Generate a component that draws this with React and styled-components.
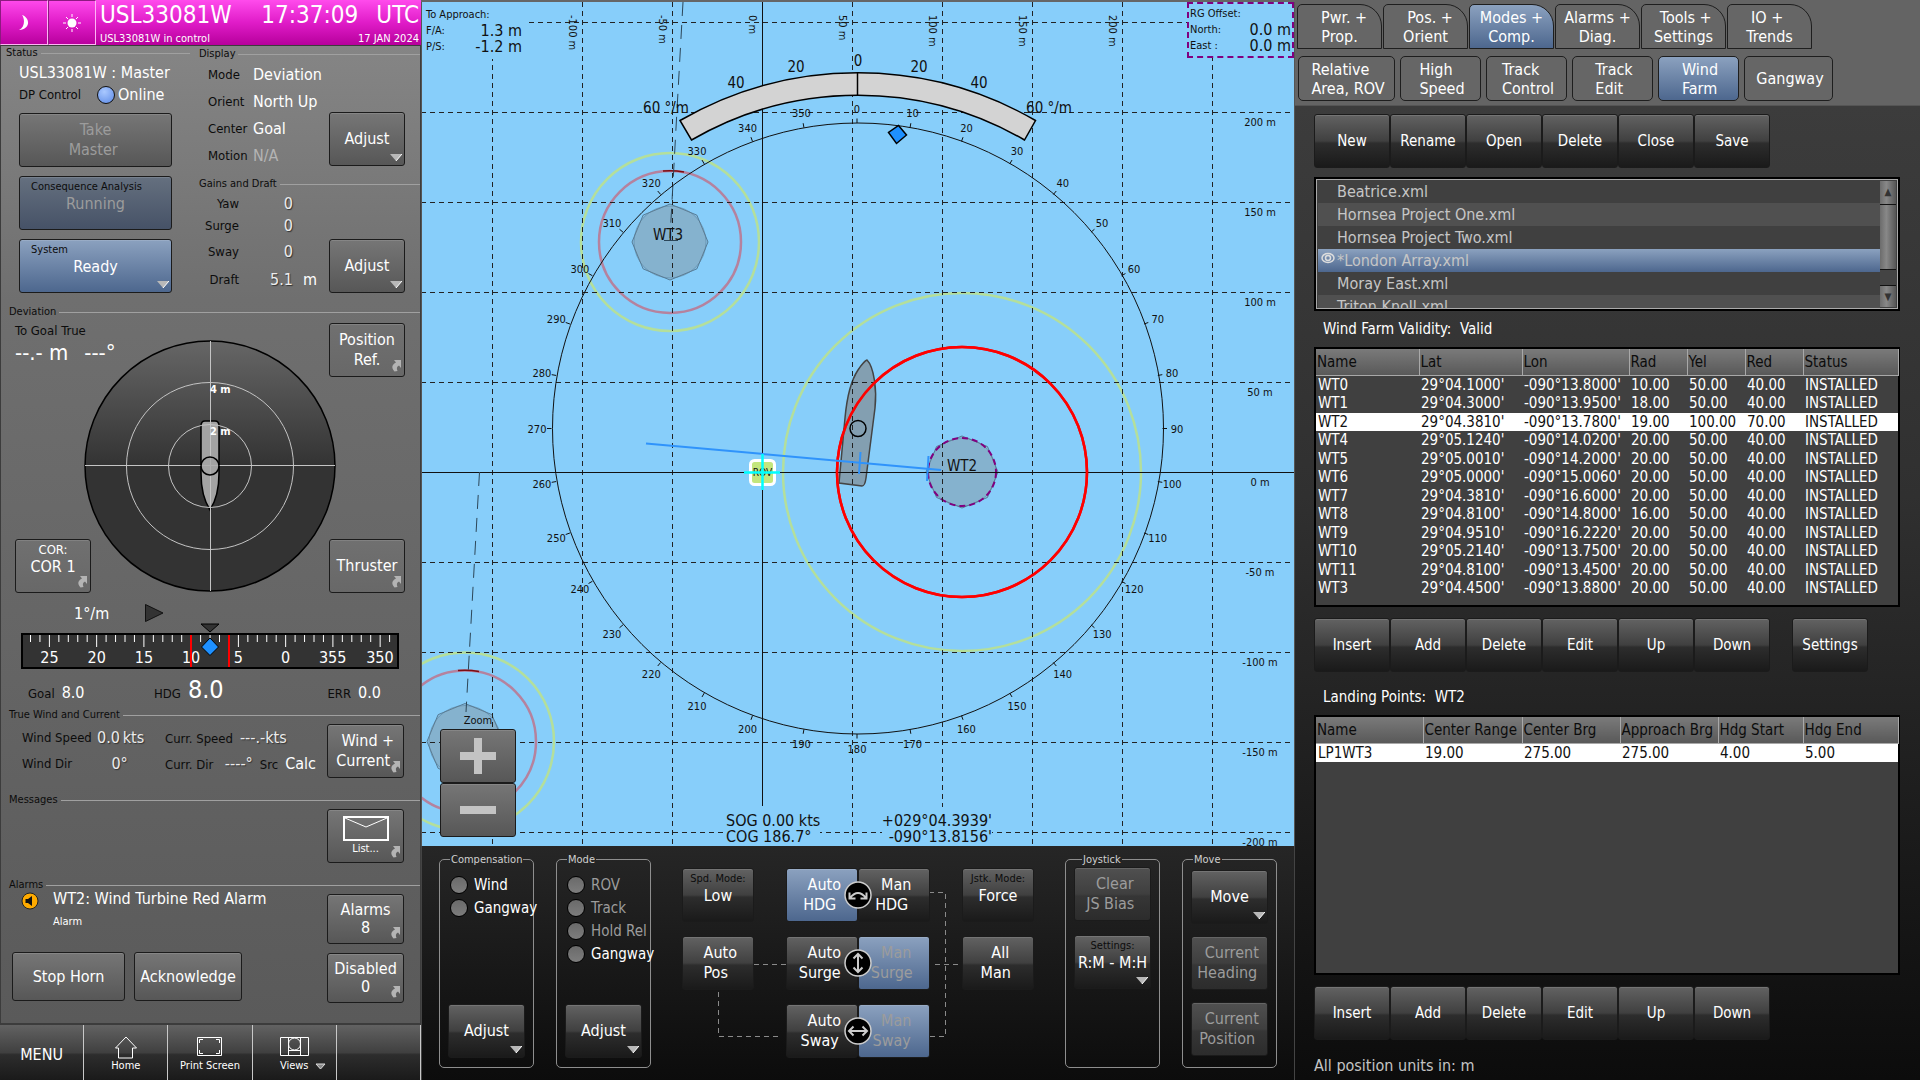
import React from 'react';
import styled, { createGlobalStyle, css } from 'styled-components';

const WATER = '#87cefa';

const turbines = [
  ['WT0', "29°04.1000'", "-090°13.8000'", '10.00', '50.00', '40.00', 'INSTALLED'],
  ['WT1', "29°04.3000'", "-090°13.9500'", '18.00', '50.00', '40.00', 'INSTALLED'],
  ['WT2', "29°04.3810'", "-090°13.7800'", '19.00', '100.00', '70.00', 'INSTALLED'],
  ['WT4', "29°05.1240'", "-090°14.0200'", '20.00', '50.00', '40.00', 'INSTALLED'],
  ['WT5', "29°05.0010'", "-090°14.2000'", '20.00', '50.00', '40.00', 'INSTALLED'],
  ['WT6', "29°05.0000'", "-090°15.0060'", '20.00', '50.00', '40.00', 'INSTALLED'],
  ['WT7', "29°04.3810'", "-090°16.6000'", '20.00', '50.00', '40.00', 'INSTALLED'],
  ['WT8', "29°04.8100'", "-090°14.8000'", '16.00', '50.00', '40.00', 'INSTALLED'],
  ['WT9', "29°04.9510'", "-090°16.2220'", '20.00', '50.00', '40.00', 'INSTALLED'],
  ['WT10', "29°05.2140'", "-090°13.7500'", '20.00', '50.00', '40.00', 'INSTALLED'],
  ['WT11', "29°04.8100'", "-090°13.4500'", '20.00', '50.00', '40.00', 'INSTALLED'],
  ['WT3', "29°04.4500'", "-090°13.8800'", '20.00', '50.00', '40.00', 'INSTALLED'],
];

const landingPoints = [['LP1WT3', '19.00', '275.00', '275.00', '4.00', '5.00']];

const files = [
  'Beatrice.xml',
  'Hornsea Project One.xml',
  'Hornsea Project Two.xml',
  '*London Array.xml',
  'Moray East.xml',
  'Triton Knoll.xml',
];

const mainTabs = [
  ['\u00a0\u00a0Pwr. +', 'Prop.'],
  ['\u00a0\u00a0Pos. +', 'Orient'],
  ['Modes +', 'Comp.'],
  ['Alarms +', 'Diag.'],
  ['\u00a0Tools +', 'Settings'],
  ['IO +\u00a0', 'Trends'],
];

const subTabs = [
  { lines: ['Relative', 'Area, ROV'], width: 97 },
  { lines: ['High', 'Speed'], width: 81 },
  { lines: ['Track', 'Control'], width: 81 },
  { lines: ['Track', 'Edit'], width: 81 },
  { lines: ['Wind', 'Farm'], width: 81, active: true },
  { lines: ['Gangway'], width: 89 },
];

const ShortcutMark = () => (
  <Mark viewBox="0 0 11 13" width="11" height="13">
    <path d="M3 1H10V9L8 6.5C5.5 7.5 5.5 9.5 6.5 12L3.5 12.5C0 8.5 1 5.5 5 3.5Z" fill="#b4b4b4" />
  </Mark>
);

const MenuMark = () => (
  <Mark viewBox="0 0 12 7" width="12" height="7">
    <path d="M0 0H12L6 7Z" fill="#b8b8b8" />
    <path d="M12 0L6 7" stroke="#fff" fill="none" />
  </Mark>
);

const Act = ({ lines, caption, mark, ...rest }) => (
  <Button type="button" {...rest}>
    {caption && <Caption>{caption}</Caption>}
    {lines.map((line) => <span key={line}>{line}</span>)}
    {mark === 'menu' && <MenuMark />}
    {mark === 'link' && <ShortcutMark />}
  </Button>
);

const DeviationDial = () => (
  <Dial viewBox="83 340 254 254">
    <defs>
      <linearGradient id="dialFill" x1="0" y1="0" x2="0" y2="1">
        <stop offset="0" stopColor="#666" />
        <stop offset="0.5" stopColor="#333" />
        <stop offset="1" stopColor="#333" />
      </linearGradient>
    </defs>
    <circle cx="210" cy="467" r="125" fill="url(#dialFill)" stroke="#000" strokeWidth="1.5" />
    <path d="M201 427Q201 422 205 422H215Q219 422 219 427V474Q219 497 210 511Q201 497 201 474Z" fill="#a3a3a3" stroke="#000" strokeWidth="1.5" />
    <g fill="none" stroke="#c4c4c4">
      <path d="M210.5 342V592M85 466.5H335" />
      <circle cx="210" cy="467" r="83.5" />
      <circle cx="210" cy="467" r="41.5" />
    </g>
    <circle cx="210" cy="467" r="9" fill="#a3a3a3" fillOpacity="0.6" stroke="#000" strokeWidth="1.5" />
    <g fill="#fff" fontSize="11" fontWeight="bold">
      <text x="210" y="394">4 m</text>
      <text x="210" y="436">2 m</text>
    </g>
  </Dial>
);

const tapeTicks = Array.from({ length: 39 }, (_, i) => i);
const tapeLabels = ['25', '20', '15', '10', '5', '0', '355', '350'];

const HeadingTape = () => (
  <Tape viewBox="20 622 380 49">
    <rect x="22" y="634" width="376" height="34" fill="#333" stroke="#000" strokeWidth="2" />
    <g stroke="#fff">
      {tapeTicks.map((i) => (
        <path key={i} d={`M${30.5 + i * 9.45} 635V${(i - 2) % 5 === 0 ? 647 : 642}`} />
      ))}
    </g>
    <g fill="#fff" fontSize="16" textAnchor="middle">
      {tapeLabels.map((label, i) => <text key={label} x={49.5 + i * 47.2} y="663">{label}</text>)}
    </g>
    <path d="M191 635V667M229 635V667" stroke="#f00" strokeWidth="2" />
    <path d="M201 624H219L210 632Z" fill="#333" stroke="#000" />
    <path d="M210 638L218.5 647L210 655.5L201.5 647Z" fill="#1e90ff" stroke="#000" />
  </Tape>
);

const compassMarks = Array.from({ length: 36 }, (_, i) => i * 10);

const polar = (deg, r, cx = 857, cy = 428.5) => {
  const a = (deg * Math.PI) / 180;
  return [cx + r * Math.sin(a), cy - r * Math.cos(a)];
};

const octagon = (cx, cy, r) =>
  Array.from({ length: 8 }, (_, i) => polar(i * 45, r, cx, cy).join(',')).join(' ');

const Turbine = ({ cx, cy, size = 38, yellow, red, alarm, dashed }) => (
  <g fill="none">
    <circle cx={cx} cy={cy} r={yellow} stroke="#b4df9b" strokeWidth="2.5" />
    <circle cx={cx} cy={cy} r={red} stroke={alarm ? '#f00' : '#b5829e'} strokeWidth="2.5" />
    {!alarm && <path d={`M${cx - 7} ${cy - red}Q${cx + 3} ${cy - red - 1} ${cx + 14} ${cy - red + 1}`} stroke="#7c0c12" strokeWidth="1.5" />}
    <polygon points={octagon(cx, cy, size)} fill="#828282" fillOpacity="0.2" stroke="#567b95" />
    <circle cx={cx} cy={cy} r={size - 2} fill="#828282" fillOpacity="0.2" stroke="#567b95" strokeOpacity="0.5" />
    {dashed && <circle cx={cx} cy={cy} r={size - 2} stroke="#800080" strokeWidth="2" strokeDasharray="6 4" />}
  </g>
);

const gridX = [492.5, 582.5, 672.5, 852.5, 942.5, 1032.5, 1122.5, 1212.5];
const gridY = [22.5, 112.5, 202.5, 292.5, 382.5, 562.5, 652.5, 742.5, 832.5];

const Chart = () => (
  <ChartSvg viewBox="421 2 874 844">
    <rect x="421" y="2" width="874" height="844" fill={WATER} />
    <Turbine cx={670} cy={242} yellow={89} red={71} />
    <Turbine cx={465} cy={741.5} yellow={89} red={71} />
    <Turbine cx={962} cy={472} size={36} yellow={179} red={125} alarm dashed />
    <path d="M867 360C874 367 877 390 875 408L866 478Q865 486 862 486L839 483L845 418Q848 385 858 370Q864 361 867 360Z" fill="#808080" fillOpacity="0.6" stroke="#444" strokeWidth="1.5" />
    <g stroke="#222" strokeDasharray="5 4">
      {gridX.map((x) => <path key={x} d={`M${x} 2V845`} />)}
      {gridY.map((y) => <path key={y} d={`M421 ${y}H1290`} />)}
    </g>
    <g stroke="#111">
      <path d="M421 472.5H1294M762.5 2V806" />
      <path d="M683 2L676 128L670 238M479.5 472L466 712" stroke="#2c4658" strokeDasharray="14 9" fill="none" />
      <path d="M664 240.5H678" stroke="#2c4658" />
    </g>
    <circle cx="962" cy="472" r="125" fill="none" stroke="#f00" strokeWidth="2.5" />
    <circle cx="858" cy="428.5" r="305.5" fill="none" stroke="#111" />
    <g stroke="#111">
      {compassMarks.map((deg) => {
        const [x1, y1] = polar(deg, 305.5);
        const [x2, y2] = polar(deg, 310);
        return <path key={deg} d={`M${x1} ${y1}L${x2} ${y2}`} />;
      })}
    </g>
    <g fontSize="11" textAnchor="middle">
      {compassMarks.map((deg) => {
        const [x, y] = polar(deg, 320);
        return <text key={deg} x={x} y={y + 4}>{deg}</text>;
      })}
    </g>
    <path d="M680 120.5A355 355 0 0 1 1035.5 120.5L1024.5 140A332 332 0 0 0 691.5 140Z" fill="#d3d3d3" stroke="#000" strokeWidth="1.5" />
    <path d="M857.5 73V96" stroke="#000" strokeWidth="1.5" />
    <g fontSize="15" textAnchor="middle">
      <text x="858" y="66">0</text>
      <text x="796" y="72">20</text>
      <text x="919" y="72">20</text>
      <text x="736" y="88">40</text>
      <text x="979" y="88">40</text>
      <text x="666" y="113">60 °/m</text>
      <text x="1049" y="113">60 °/m</text>
      <text x="668" y="240">WT3</text>
      <text x="962" y="471">WT2</text>
    </g>
    <path d="M898.5 125.5L906.5 135L896.5 143.5L888.5 132.5Z" fill="#1e90ff" stroke="#000" strokeWidth="1.5" />
    <circle cx="858" cy="428.5" r="8" fill="none" stroke="#000" strokeWidth="1.5" />
    <path d="M646 443.5L941 470M860.5 452L859 474M928.5 456L927 481" stroke="#2f93fb" strokeWidth="2" />
    <rect x="750.5" y="460.5" width="24" height="24" rx="4" fill="#c3e67d" stroke="#fff" strokeWidth="3" />
    <text x="762.5" y="476" fontSize="10" textAnchor="middle">ROV</text>
    <path d="M744 472.5H780M762.5 454V490" stroke="#0ff" strokeWidth="2.5" />
    <g fontSize="11">
      {[[-100, 569], [-50, 659], [0, 749], [50, 839], [100, 929], [150, 1019], [200, 1109]].map(([v, x]) => (
        <text key={v} transform={`translate(${x} 15) rotate(90)`}>{v} m</text>
      ))}
    </g>
    <g fontSize="11" textAnchor="middle">
      {[200, 150, 100, 50, 0, -50, -100, -150, -200].map((v, i) => (
        <text key={v} x="1260" y={126 + i * 90}>{v} m</text>
      ))}
    </g>
  </ChartSvg>
);

const arrows = {
  turn: 'M6 17Q14 7 22 17M5.5 11.5V17.5H11.5M22.5 11.5V17.5H16.5',
  vertical: 'M14 5V23M9.5 9.5L14 5L18.5 9.5M9.5 18.5L14 23L18.5 18.5',
  horizontal: 'M5 14H23M9.5 9.5L5 14L9.5 18.5M18.5 9.5L23 14L18.5 18.5',
};

const AxisPair = ({ axis, icon, autoOn }) => (
  <Pair>
    <Act lines={['\u00a0Auto', `${axis}\u00a0`]} tone={autoOn ? 'blue' : 'dark'} />
    <Act lines={['\u00a0Man', `${axis}\u00a0`]} tone={autoOn ? 'dark' : 'blue'} dim={!autoOn} />
    <AxisIcon viewBox="0 0 28 28">
      <circle cx="14" cy="14" r="13" fill="#000" stroke="#ccc" strokeWidth="1.5" />
      <path d={arrows[icon]} fill="none" stroke="#ccc" strokeWidth="2" />
    </AxisIcon>
  </Pair>
);

const LeftPanel = () => (
  <Side>
    <TopBar>
      <ThemeButton type="button" aria-label="Night">
        <svg width="12" height="16" viewBox="0 0 12 16"><path d="M4 0C13 3 12 15 1 15C7 12 7 4 4 0Z" fill="#fff" /></svg>
      </ThemeButton>
      <ThemeButton type="button" aria-label="Day">
        <svg width="18" height="18" viewBox="0 0 18 18">
          <circle cx="9" cy="9" r="4.5" fill="#fff" />
          <path d="M9 0V3M9 15V18M0 9H3M15 9H18M3 3L5 5M13 13L15 15M15 3L13 5M5 13L3 15" stroke="#fff" />
        </svg>
      </ThemeButton>
      <TopText>
        <TopLine big><span>USL33081W</span><TopClock><span>17:37:09</span><span>UTC</span></TopClock></TopLine>
        <TopLine><span>USL33081W in control</span><span>17 JAN 2024</span></TopLine>
      </TopText>
    </TopBar>
    <SideBody>
      <StatusGrid>
        <StatusCol>
          <Title end={9}>Status</Title>
          <Value>USL33081W : Master</Value>
          <Online><Label>DP Control</Label><Led /><Value>Online</Value></Online>
          <Act lines={['Take', 'Master\u00a0']} tone="metal" dim tall disabled />
          <Act caption="Consequence Analysis" lines={['Running']} tone="slate" dim tall disabled />
          <Act caption="System" lines={['Ready']} tone="blue" mark="menu" tall />
        </StatusCol>
        <DisplayCol>
          <Title>Display</Title>
          <WithButton>
            <DisplayList>
              <Label as="dt">Mode</Label><Value as="dd">Deviation</Value>
              <Label as="dt">Orient</Label><Value as="dd">North Up</Value>
              <Label as="dt">Center</Label><Value as="dd">Goal</Value>
              <Label as="dt">Motion</Label><Value as="dd" dim>N/A</Value>
            </DisplayList>
            <ButtonSlot drop={3}><Act lines={['Adjust']} tone="metal" mark="menu" /></ButtonSlot>
          </WithButton>
          <GainTitle>Gains and Draft</GainTitle>
          <WithButton>
            <GainList>
              <Label as="dt">Yaw</Label><Value as="dd" raised>0</Value><span />
              <Label as="dt">Surge</Label><Value as="dd" raised>0</Value><span />
              <Label as="dt">Sway</Label><Value as="dd" raised>0</Value><span />
              <Label as="dt">Draft</Label><Value as="dd" raised>5.1</Value><Value>m</Value>
            </GainList>
            <ButtonSlot drop={0}><Act lines={['Adjust']} tone="metal" mark="menu" /></ButtonSlot>
          </WithButton>
        </DisplayCol>
      </StatusGrid>
      <Title inset={8} top={12}>Deviation</Title>
      <DeviationGrid>
        <DeviationDial />
        <Goal><Label>To Goal True</Label><Reading><span>--.- m</span><span>---°</span></Reading></Goal>
        <Corner place="top-right"><Act lines={['Position', 'Ref.']} tone="flat" mark="link" /></Corner>
        <Corner place="bottom-left"><Act lines={['COR 1']} tone="flat" caption="COR:" light mark="link" /></Corner>
        <Corner place="bottom-right"><Act lines={['Thruster']} tone="flat" mark="link" /></Corner>
      </DeviationGrid>
      <RateRow>
        <Value>1°/m</Value>
        <svg width="19" height="18" viewBox="0 0 19 18"><path d="M0.5 0.5L18 9L0.5 17.5Z" fill="#333" stroke="#111" /></svg>
      </RateRow>
      <HeadingTape />
      <HeadingRow>
        <Figure><Label>Goal</Label><Value>8.0</Value></Figure>
        <Figure><Label>HDG</Label><Value big>8.0</Value></Figure>
        <Figure><Label>ERR</Label><Value>0.0</Value></Figure>
      </HeadingRow>
      <Title inset={8} top={4}>True Wind and Current</Title>
      <WindBlock>
        <WindGrid>
          <Label>Wind Speed</Label><Value raised>0.0&#8201;kts</Value>
          <Figure><Label>Curr. Speed</Label><Value raised>---.-kts</Value></Figure>
          <Label>Wind Dir</Label><Value raised>&emsp;0°</Value>
          <Figure><Label>Curr. Dir</Label><Value raised>&nbsp;----°</Value><Label>Src</Label><Value>Calc</Value></Figure>
        </WindGrid>
        <Act lines={['\u00a0Wind +', 'Current\u00a0']} tone="metal" mark="link" />
      </WindBlock>
      <Title inset={8} top={15}>Messages</Title>
      <MessageBlock>
        <Button type="button" tone="metal">
          <svg width="46" height="26" viewBox="0 0 46 26"><path d="M1 1H45V24H1Z" fill="none" stroke="#fff" strokeWidth="2" /><path d="M2 2L23 11L44 2" fill="none" stroke="#fff" /></svg>
          <Tiny>List...</Tiny>
          <ShortcutMark />
        </Button>
      </MessageBlock>
      <Title inset={8} top={15}>Alarms</Title>
      <AlarmBlock>
        <AlarmLeft>
          <AlarmLine>
            <svg width="18" height="18" viewBox="0 0 18 18">
              <circle cx="9" cy="9" r="8" fill="#ffab00" stroke="#222" />
              <path d="M4.5 7H7L11 4V14L7 11H4.5Z" fill="#111" />
            </svg>
            <AlarmText><Value>WT2: Wind Turbine Red Alarm</Value><Tiny>Alarm</Tiny></AlarmText>
          </AlarmLine>
          <AlarmActions>
            <Act lines={['Stop Horn']} tone="metal" />
            <Act lines={['Acknowledge']} tone="metal" />
          </AlarmActions>
        </AlarmLeft>
        <AlarmRight>
          <Act lines={['Alarms', '8']} tone="metal" mark="link" tight />
          <Act lines={['Disabled', '0']} tone="metal" mark="link" tight />
        </AlarmRight>
      </AlarmBlock>
    </SideBody>
    <Footer>
      <FootButton type="button">MENU</FootButton>
      <FootButton type="button">
        <svg width="24" height="23" viewBox="0 0 24 23"><path d="M12 1L22.5 12H18.5V22H4.5V12H1.5Z" fill="none" stroke="#fff" /></svg>
        <Tiny>Home</Tiny>
      </FootButton>
      <FootButton type="button">
        <svg width="25" height="23" viewBox="0 0 25 23"><path d="M0.5 1.5H24.5V19.5H0.5Z" fill="none" stroke="#fff" /><path d="M2.5 7V3.5H6M19 3.5H22.5V7M22.5 14V17.5H19M6 17.5H2.5V14" fill="none" stroke="#fff" /></svg>
        <Tiny>Print Screen</Tiny>
      </FootButton>
      <FootButton type="button">
        <svg width="29" height="23" viewBox="0 0 29 23"><path d="M0.5 1.5H28.5V19.5H0.5ZM8.5 1.5V19.5M20.5 1.5V19.5M8.5 14.5H20.5" fill="none" stroke="#fff" /><circle cx="14.5" cy="8" r="6" fill="none" stroke="#fff" /></svg>
        <Tiny>Views</Tiny>
        <FootMark viewBox="0 0 12 7"><path d="M1 1H10L5.5 6Z" fill="#888" stroke="#ddd" /></FootMark>
      </FootButton>
      <FootButton type="button" aria-label="Empty slot" />
    </Footer>
  </Side>
);

const CenterPanel = () => (
  <Center>
    <MapArea>
      <Chart />
      <Approach>
        <small>To Approach:</small><span />
        <small>F/A:</small><span>1.3 m</span>
        <small>P/S:</small><span>-1.2 m</span>
      </Approach>
      <Offset>
        <small>RG Offset:</small><span />
        <small>North:</small><span>0.0 m</span>
        <small>East :</small><span>0.0 m</span>
      </Offset>
      <Speed><span>SOG 0.00 kts</span><span>COG 186.7°</span></Speed>
      <Position><span>+029°04.3939'</span><span>-090°13.8156'</span></Position>
      <Zoom>
        <span>Zoom</span>
        <Button type="button" tone="metal" aria-label="Zoom in"><svg width="36" height="36" viewBox="0 0 36 36"><path d="M14 0H22V14H36V22H22V36H14V22H0V14H14Z" fill="#c3c3c3" /></svg></Button>
        <Button type="button" tone="metal" aria-label="Zoom out"><svg width="36" height="36" viewBox="0 0 36 36"><path d="M0 14H36V22H0Z" fill="#c3c3c3" /></svg></Button>
      </Zoom>
    </MapArea>
    <Controls>
      <GroupPair>
        <Group>
          <legend>Compensation</legend>
          <Choice><input type="checkbox" />Wind</Choice>
          <Choice><input type="checkbox" />Gangway</Choice>
          <Push />
          <Act lines={['Adjust']} tone="dark" mark="menu" />
        </Group>
        <Group>
          <legend>Mode</legend>
          <Choice dim><input type="radio" name="mode" disabled />ROV</Choice>
          <Choice dim><input type="radio" name="mode" disabled />Track</Choice>
          <Choice dim><input type="radio" name="mode" disabled />Hold Rel</Choice>
          <Choice><input type="radio" name="mode" />Gangway</Choice>
          <Push />
          <Act lines={['Adjust']} tone="dark" mark="menu" />
        </Group>
      </GroupPair>
      <Matrix>
        <Links viewBox="682 868 352 190">
          <path d="M754 964.5H786M718.5 992V1036.5H778M929 892.5H945.5V1036.5H929M935 964.5H960" fill="none" stroke="#8a8a8a" strokeDasharray="5 4" />
        </Links>
        <Act caption="Spd. Mode:" lines={['Low']} tone="dark" />
        <AxisPair axis="HDG" icon="turn" autoOn />
        <Act caption="Jstk. Mode:" lines={['Force']} tone="dark" />
        <Act lines={['\u00a0Auto', 'Pos\u00a0']} tone="dark" />
        <AxisPair axis="Surge" icon="vertical" />
        <Act lines={['\u00a0All', 'Man\u00a0']} tone="dark" />
        <span />
        <AxisPair axis="Sway" icon="horizontal" />
        <span />
      </Matrix>
      <GroupPair>
        <Group indent>
          <legend>Joystick</legend>
          <Act lines={['\u00a0Clear', 'JS Bias\u00a0']} tone="dusk" dim disabled />
          <Act caption="Settings:" lines={['R:M - M:H']} tone="dark" mark="menu" />
        </Group>
        <Group compact>
          <legend>Move</legend>
          <Act lines={['Move']} tone="dark" mark="menu" />
          <Act lines={['\u00a0Current', 'Heading\u00a0']} tone="dusk" dim disabled />
          <Act lines={['\u00a0Current', 'Position\u00a0']} tone="dusk" dim disabled />
        </Group>
      </GroupPair>
    </Controls>
  </Center>
);

const DataTable = ({ columns, rows, selected, label }) => (
  <TableBox>
    <Table aria-label={label}>
      <colgroup>{columns.map(([name, width]) => <Col key={name} w={width} />)}</colgroup>
      <thead><tr>{columns.map(([name]) => <th key={name}>{name}</th>)}</tr></thead>
      <tbody>
        {rows.map((row, i) => (
          <Row key={row[0]} selected={i === selected}>{row.map((cell, j) => <td key={j}>{cell}</td>)}</Row>
        ))}
      </tbody>
    </Table>
  </TableBox>
);

const RightPanel = () => (
  <Right>
    <Tabs>
      <TabRow role="tablist">
        {mainTabs.map((lines, i) => (
          <MainTab key={lines[0]} type="button" role="tab" aria-selected={i === 2} active={i === 2}>
            {lines.map((l) => <span key={l}>{l}</span>)}
          </MainTab>
        ))}
      </TabRow>
      <TabRow role="tablist" sub>
        {subTabs.map(({ lines, width, active }) => (
          <SubTab key={lines.join()} type="button" role="tab" aria-selected={!!active} active={active} w={width}>
            <SubText>{lines.map((l) => <span key={l}>{l}</span>)}</SubText>
          </SubTab>
        ))}
      </TabRow>
    </Tabs>
    <Farm>
      <Actions>{['New', 'Rename', 'Open', 'Delete', 'Close', 'Save'].map((t) => <Act key={t} lines={[t]} tone="dark" />)}</Actions>
      <FileBox>
        <FileList role="listbox" aria-label="Wind farm files">
          {files.map((name, i) => (
            <FileItem key={name} role="option" aria-selected={i === 3} selected={i === 3}>
              {i === 3 && (
                <Eye viewBox="0 0 14 12"><ellipse cx="7" cy="6" rx="6" ry="4.5" fill="none" stroke="#ddd" strokeWidth="1.5" /><circle cx="7" cy="6" r="2.5" fill="none" stroke="#ddd" strokeWidth="1.5" /></Eye>
              )}
              {name}
            </FileItem>
          ))}
        </FileList>
        <Scroll><i>▲</i><b /><em /><i>▼</i></Scroll>
      </FileBox>
      <Note>Wind Farm Validity:&nbsp; Valid</Note>
      <DataTable
        label="Wind turbines"
        columns={[['Name', 103], ['Lat', 103], ['Lon', 107], ['Rad', 58], ['Yel', 58], ['Red', 58], ['Status', 95]]}
        rows={turbines}
        selected={2}
      />
      <Actions spaced>
        {['Insert', 'Add', 'Delete', 'Edit', 'Up', 'Down', 'Settings'].map((t) => <Act key={t} lines={[t]} tone="dark" />)}
      </Actions>
      <Note>Landing Points:&nbsp; WT2</Note>
      <DataTable
        label="Landing points"
        columns={[['Name', 107], ['Center Range', 99], ['Center Brg', 98], ['Approach Brg', 98], ['Hdg Start', 85], ['Hdg End', 95]]}
        rows={landingPoints}
        selected={0}
      />
      <Actions>{['Insert', 'Add', 'Delete', 'Edit', 'Up', 'Down'].map((t) => <Act key={t} lines={[t]} tone="dark" />)}</Actions>
      <Units>All position units in: m</Units>
    </Farm>
  </Right>
);

const App = () => (
  <>
    <GlobalStyle />
    <Console>
      <LeftPanel />
      <CenterPanel />
      <RightPanel />
    </Console>
  </>
);

export default App;

const GlobalStyle = createGlobalStyle`
  * {
    box-sizing: border-box;
  }

  body {
    margin: 0;
    background: #111;
    font-family: "DejaVu Sans Condensed", "Noto Sans", sans-serif;
    font-size: 16px;
    color: #fff;
  }

  button {
    font: inherit;
    color: inherit;
    padding: 0;
  }

  svg {
    flex: none;
  }
`;

const Console = styled.main`
  display: grid;
  grid-template-columns: minmax(0, 421fr) minmax(0, 874fr) minmax(0, 625fr);
  min-height: 100vh;
`;

const tones = {
  metal: 'linear-gradient(#767676, #575757)',
  flat: 'linear-gradient(#707070, #686868)',
  slate: 'linear-gradient(#65707f, #465267)',
  blue: 'linear-gradient(#8ba1bf, #4d678e)',
  dark: 'linear-gradient(#626262, #404040 50%, #2d2d2d 54%, #1a1a1a)',
  dusk: 'linear-gradient(#505050, #3f3f3f 50%, #363636 54%, #2c2c2c)',
};

const styleProps = ['tone', 'dim', 'light', 'tall', 'tight', 'active', 'w', 'sub', 'spaced', 'selected', 'big', 'raised', 'end', 'inset', 'top', 'drop', 'place', 'indent', 'compact'];

const keep = { shouldForwardProp: (prop) => !styleProps.includes(prop) };

const Button = styled.button.withConfig(keep)`
  position: relative;
  display: flex;
  flex-direction: column;
  align-items: center;
  justify-content: center;
  width: 100%;
  height: 54px;
  border: 1px solid #1b1b1b;
  border-radius: 3px;
  background: ${(props) => tones[props.tone]};
  box-shadow: inset 0 1px 0 rgba(255, 255, 255, 0.12);
  color: ${(props) => (props.dim ? '#9c9c9c' : '#fff')};
  line-height: ${(props) => (props.tight ? 18 : 20)}px;
  white-space: nowrap;

  small {
    align-self: ${(props) => (props.tall ? 'flex-start' : 'center')};
    color: ${(props) => (props.light ? '#fff' : '#0c0c0c')};
    margin: ${(props) => (props.tall ? '0 0 0 11px' : '0')};
  }
`;

const Caption = styled.small`
  font-size: 11px;
  line-height: 15px;

  & + span {
    padding-bottom: 14px;
  }
`;

const Mark = styled.svg`
  position: absolute;
  right: 2px;
  bottom: 4px;
`;

const Label = styled.span`
  margin: 0;
  color: #0c0c0c;
  font-size: 13px;
  white-space: nowrap;
`;

const Value = styled.span.withConfig(keep)`
  margin: 0;
  font-size: ${(props) => (props.big ? 25 : 16)}px;
  color: ${(props) => (props.dim ? '#b4b4b4' : props.raised ? '#ececec' : '#fff')};
  text-shadow: ${(props) => (props.raised ? '1px 1px 1px #333' : 'none')};
  white-space: nowrap;
`;

const Tiny = styled.span`
  font-size: 11px;
  line-height: 14px;
`;

const Title = styled.h2.withConfig(keep)`
  display: flex;
  align-items: center;
  gap: 3px;
  margin: ${(props) => props.top || 0}px ${(props) => props.end || 0}px 0 ${(props) => props.inset || 0}px;
  color: #0c0c0c;
  font-size: 11px;
  font-weight: normal;
  line-height: 14px;
  white-space: nowrap;

  &::after {
    content: '';
    flex: 1;
    height: 1px;
    background: #a0a0a0;
  }
`;

const GainTitle = styled(Title)`
  margin-top: 8px;
`;

const Side = styled.section`
  display: flex;
  flex-direction: column;
`;

const TopBar = styled.header`
  display: flex;
  height: 45px;
  background: linear-gradient(#ff4bec, #e01cc8 50%, #b7009c);
`;

const ThemeButton = styled.button`
  display: grid;
  place-items: center;
  width: 48px;
  border: 1px solid #8d1a80;
  border-right: 1px solid #ffb5f5;
  border-bottom: 1px solid #ffb5f5;
  background: none;
`;

const TopText = styled.div`
  flex: 1;
  padding: 0 2px 0 4px;
`;

const TopLine = styled.div.withConfig(keep)`
  display: flex;
  justify-content: space-between;
  font-size: ${(props) => (props.big ? 24 : 11)}px;
  line-height: ${(props) => (props.big ? 31 : 16)}px;
`;

const TopClock = styled.span`
  display: flex;
  gap: 18px;
`;

const SideBody = styled.div`
  flex: 1;
  border: 1px solid #3c3c3c;
  border-bottom-width: 2px;
  background: linear-gradient(#858585, #6f6f6f 26%, #5a5a5a);
`;

const StatusGrid = styled.div`
  display: grid;
  grid-template-columns: 198px 1fr;
`;

const StatusCol = styled.div`
  padding-left: 5px;

  > span,
  > div {
    display: flex;
    align-items: center;
    margin-left: 13px;
    height: 19px;
  }

  > span {
    height: 25px;
  }

  > button {
    width: 153px;
    margin: 9px 0 0 13px;
  }
`;

const Online = styled.div`
  && > :last-child {
    margin-left: 3px;
  }
`;

const Led = styled.i`
  width: 18px;
  height: 18px;
  margin-left: 16px;
  border: 1px solid #111;
  border-radius: 50%;
  background: radial-gradient(circle at 40% 30%, #a9c8ff, #5c8ae6);
`;

const DisplayCol = styled.div`
  padding-top: 1px;
`;

const WithButton = styled.div`
  display: grid;
  grid-template-columns: 1fr 76px;
  padding-right: 15px;
`;

const ButtonSlot = styled.div.withConfig(keep)`
  align-self: end;
  margin-bottom: ${(props) => props.drop}px;
`;

const DisplayList = styled.dl`
  display: grid;
  grid-template-columns: 45px 1fr;
  grid-auto-rows: 27px;
  align-items: center;
  margin: 0 0 0 9px;
`;

const GainList = styled.dl`
  display: grid;
  grid-template-columns: 40px 54px 1fr;
  grid-template-rows: 24px 21px 30px 27px;
  align-items: center;
  justify-items: end;
  margin: 0;

  span:last-child {
    justify-self: start;
    margin-left: 10px;
  }
`;

const DeviationGrid = styled.div`
  display: grid;
  grid-template: auto 1fr auto / 76px 1fr 76px;
  padding: 4px 15px 0 14px;
`;

const Dial = styled.svg`
  grid-area: 1 / 1 / 4 / 4;
  width: 254px;
  justify-self: center;
  margin-top: 16px;
`;

const Goal = styled.div`
  grid-area: 1 / 1 / 2 / 3;
  display: flex;
  flex-direction: column;
`;

const Reading = styled.div`
  display: flex;
  gap: 16px;
  font-size: 22px;
  line-height: 30px;
`;

const Corner = styled.div.withConfig(keep)`
  ${(props) => props.place === 'top-right' && css`grid-area: 1 / 3;`}
  ${(props) => props.place === 'bottom-left' && css`grid-area: 3 / 1;`}
  ${(props) => props.place === 'bottom-right' && css`grid-area: 3 / 3;`}

  small {
    font-size: 13px;
  }
`;

const RateRow = styled.div`
  display: flex;
  align-items: center;
  gap: 36px;
  height: 18px;
  margin: 11px 0 0 73px;
`;

const Tape = styled.svg`
  display: block;
  width: calc(100% - 39px);
  margin: 0 20px 0 19px;
`;

const HeadingRow = styled.div`
  display: grid;
  grid-template-columns: 126px 1fr auto;
  align-items: baseline;
  padding: 4px 39px 0 27px;
`;

const Figure = styled.div`
  display: flex;
  align-items: baseline;
  gap: 7px;
`;

const WindBlock = styled.div`
  display: grid;
  grid-template-columns: 1fr 77px;
  padding: 2px 16px 0 21px;
`;

const WindGrid = styled.div`
  display: grid;
  grid-template-columns: 75px 68px 1fr;
  grid-auto-rows: 26px;
  align-items: center;
`;

const MessageBlock = styled.div`
  display: grid;
  grid-template-columns: 77px;
  justify-content: end;
  padding: 2px 16px 0 0;
`;

const AlarmBlock = styled.div`
  display: grid;
  grid-template-columns: 1fr 77px;
  padding: 0 16px 0 11px;
`;

const AlarmLeft = styled.div`
  display: flex;
  flex-direction: column;
  justify-content: space-between;
  padding-bottom: 2px;
`;

const AlarmLine = styled.div`
  display: flex;
  gap: 14px;
  padding-left: 9px;
`;

const AlarmText = styled.div`
  display: flex;
  flex-direction: column;
  line-height: 14px;
  gap: 9px;
`;

const AlarmActions = styled.div`
  display: grid;
  grid-template-columns: 113px 108px;
  gap: 9px;

  button {
    height: 49px;
  }
`;

const AlarmRight = styled.div`
  display: grid;
  gap: 9px;
  padding-top: 2px;

  button {
    height: 50px;
  }
`;

const Footer = styled.nav`
  display: grid;
  grid-template-columns: repeat(5, 1fr);
`;

const FootButton = styled.button`
  position: relative;
  display: flex;
  flex-direction: column;
  align-items: center;
  justify-content: center;
  height: 55px;
  padding-top: 3px;
  border: 0;
  border-right: 1px solid #c8c8c8;
  background: ${tones.dark};
`;

const FootMark = styled.svg`
  position: absolute;
  right: 9px;
  bottom: 10px;
  width: 12px;
`;

const Center = styled.section`
  display: flex;
  flex-direction: column;
  border-top: 2px solid #666;
`;

const MapArea = styled.div`
  position: relative;
  overflow: hidden;
  border-left: 1px solid #555;
  border-right: 1px solid #555;
  background: ${WATER};
  color: #111;
`;

const ChartSvg = styled.svg`
  display: block;
  width: calc(100% + 2px);
  margin: 0 -1px;
  fill: #111;
`;

const Readout = styled.div`
  position: absolute;
  top: 0;
  display: grid;
  grid-template-columns: 32px 1fr;
  grid-auto-rows: 16px;
  align-items: center;
  background: ${WATER};
  line-height: 16px;
  white-space: nowrap;

  small {
    font-size: 11px;
  }

  span {
    text-align: right;
  }
`;

const Approach = styled(Readout)`
  left: 0;
  width: 106px;
  padding: 5px 6px 4px 4px;
`;

const Offset = styled(Readout)`
  right: 0;
  width: 107px;
  padding: 2px 1px;
  border: 2px dashed #800080;
`;

const Speed = styled.div`
  position: absolute;
  left: 304px;
  bottom: 1px;
  display: grid;
  background: ${WATER};
  line-height: 16px;
  padding-top: 6px;
`;

const Position = styled(Speed)`
  left: auto;
  right: 302px;
  text-align: right;
`;

const Zoom = styled.div`
  position: absolute;
  left: 18px;
  bottom: 9px;
  display: grid;
  width: 76px;
  text-align: center;
  font-size: 11px;
  line-height: 16px;
`;

const Controls = styled.div`
  flex: 1;
  display: flex;
  justify-content: space-between;
  padding: 6px 17px 12px;
  border-left: 1px solid #444;
  border-right: 1px solid #444;
  background: linear-gradient(#262626, #0c0c0c);
`;

const GroupPair = styled.div`
  display: grid;
  grid-template-columns: 95px 95px;
  gap: 22px;
`;

const Group = styled.fieldset.withConfig(keep)`
  display: flex;
  flex-direction: column;
  gap: ${(props) => (props.compact ? 12 : 14)}px;
  min-width: 0;
  margin: 0;
  padding: ${(props) => (props.compact ? 3 : 0)}px 8px 9px;
  border: 1px solid #8e8e8e;
  border-radius: 5px;

  legend {
    margin-left: ${(props) => (props.indent ? 8 : 2)}px;
    padding: 0 1px;
    color: #d0d0d0;
    font-size: 11px;
    line-height: 15px;
  }
`;

const Choice = styled.label.withConfig(keep)`
  display: flex;
  align-items: center;
  gap: 6px;
  height: 18px;
  margin: 5px 0 -14px 2px;
  color: ${(props) => (props.dim ? '#9c9c9c' : '#fff')};
  font-size: 15px;
  white-space: nowrap;

  legend + & {
    margin-top: 9px;
  }

  input {
    appearance: none;
    flex: none;
    width: 18px;
    height: 18px;
    margin: 0;
    border: 1px solid #000;
    border-radius: 50%;
    background: linear-gradient(#6a6a6a, #7d7d7d);
  }
`;

const Push = styled.div`
  flex: 1;
`;

const Matrix = styled.div`
  position: relative;
  display: grid;
  grid-template-columns: 72px 144px 72px;
  grid-auto-rows: 54px;
  align-content: start;
  gap: 14px 32px;
  padding-top: 16px;
`;

const Links = styled.svg`
  position: absolute;
  top: 16px;
  left: 0;
  width: 352px;
`;

const Pair = styled.div`
  position: relative;
  display: flex;
`;

const AxisIcon = styled.svg`
  position: absolute;
  left: 58px;
  top: 13px;
  width: 28px;
`;

const Right = styled.section`
  display: flex;
  flex-direction: column;
`;

const Tabs = styled.header`
  display: flex;
  flex-direction: column;
  gap: 7px;
  padding: 4px 2px 4px;
  border-bottom: 1px solid #555;
  background: #646464;
`;

const TabRow = styled.div.withConfig(keep)`
  display: flex;
  gap: ${(props) => (props.sub ? 5 : 1)}px;
  padding-left: ${(props) => (props.sub ? 1 : 0)}px;
`;

const MainTab = styled.button.withConfig(keep)`
  display: flex;
  flex-direction: column;
  align-items: center;
  justify-content: center;
  width: 85px;
  height: 45px;
  border: 1px solid #1e1e1e;
  border-radius: 5px 22px 0 0;
  background: ${(props) => (props.active ? tones.blue : '#666')};
  line-height: 19px;
`;

const SubTab = styled.button.withConfig(keep)`
  display: grid;
  place-items: center;
  width: ${(props) => props.w}px;
  height: 45px;
  border: 1px solid #1e1e1e;
  border-radius: 5px;
  background: ${(props) => (props.active ? tones.blue : '#666')};
  line-height: 19px;
`;

const SubText = styled.span`
  display: grid;
  padding-left: 3px;
  text-align: left;
`;

const Farm = styled.div`
  flex: 1;
  padding: 8px 20px 0 19px;
  background: linear-gradient(#3c3c3c, #303030 40%, #0c0c0c);
`;

const Actions = styled.div.withConfig(keep)`
  display: flex;

  button {
    width: 76px;
    font-size: 15px;
  }

  ${(props) => props.spaced && css`
    button:last-child {
      margin-left: 22px;
    }
  `}
`;

const FileBox = styled.div`
  display: flex;
  height: 134px;
  margin-top: 9px;
  border: 2px solid #000;
  outline: 1px solid #aaa;
  outline-offset: -3px;
  padding: 1px 2px;
  background: #404040;
`;

const FileList = styled.ul`
  flex: 1;
  margin: 0;
  padding: 0;
  overflow: hidden;
  list-style: none;
`;

const FileItem = styled.li.withConfig(keep)`
  position: relative;
  height: 23px;
  padding-left: 19px;
  color: #c6c6c6;
  line-height: 24px;
  background: ${(props) => (props.selected ? tones.blue : '#404040')};

  &:nth-child(even) {
    background: ${(props) => (props.selected ? tones.blue : '#505050')};
  }
`;

const Eye = styled.svg`
  position: absolute;
  left: 3px;
  top: 3px;
  width: 14px;
`;

const Scroll = styled.div`
  display: grid;
  grid-template-rows: 23px 1fr 15px 21px;
  gap: 1px;
  width: 16px;
  margin: 1px 0;
  background: #111;
  color: #333;
  font-size: 10px;
  line-height: 22px;
  text-align: center;

  i,
  b {
    background: linear-gradient(90deg, #6c6c6c, #888 40%, #555);
    font-style: normal;
  }

  em {
    background: #444;
  }
`;

const Note = styled.p`
  margin: 0 0 0 9px;
  font-size: 15px;
  line-height: 36px;

  ${Actions} + & {
    height: 43px;
    line-height: 50px;
  }
`;

const TableBox = styled.div`
  height: 260px;
  margin-bottom: 11px;
  border: 2px solid #000;
  background: #404040;
`;

const Table = styled.table`
  width: 100%;
  border-collapse: collapse;
  table-layout: fixed;
  font-size: 15px;
  line-height: 18px;
  white-space: nowrap;

  th {
    height: 26px;
    padding: 1px 1px 0;
    border-right: 1px solid #a8a8a8;
    border-bottom: 1px solid #a8a8a8;
    background: linear-gradient(#7a7a7a, #595959);
    color: #0c0c0c;
    font-weight: normal;
    text-align: left;
  }

  td {
    height: 18px;
    padding: 0 2px;
  }

  tr:nth-child(even) td {
    height: 19px;
  }
`;

const Col = styled.col.withConfig(keep)`
  width: ${(props) => props.w}px;
`;

const Row = styled.tr.withConfig(keep)`
  background: ${(props) => (props.selected ? '#fff' : 'none')};
  color: ${(props) => (props.selected ? '#111' : '#fff')};
`;

const Units = styled.p`
  margin: 14px 0 0;
  color: #c4c4c4;
  line-height: 24px;
`;
